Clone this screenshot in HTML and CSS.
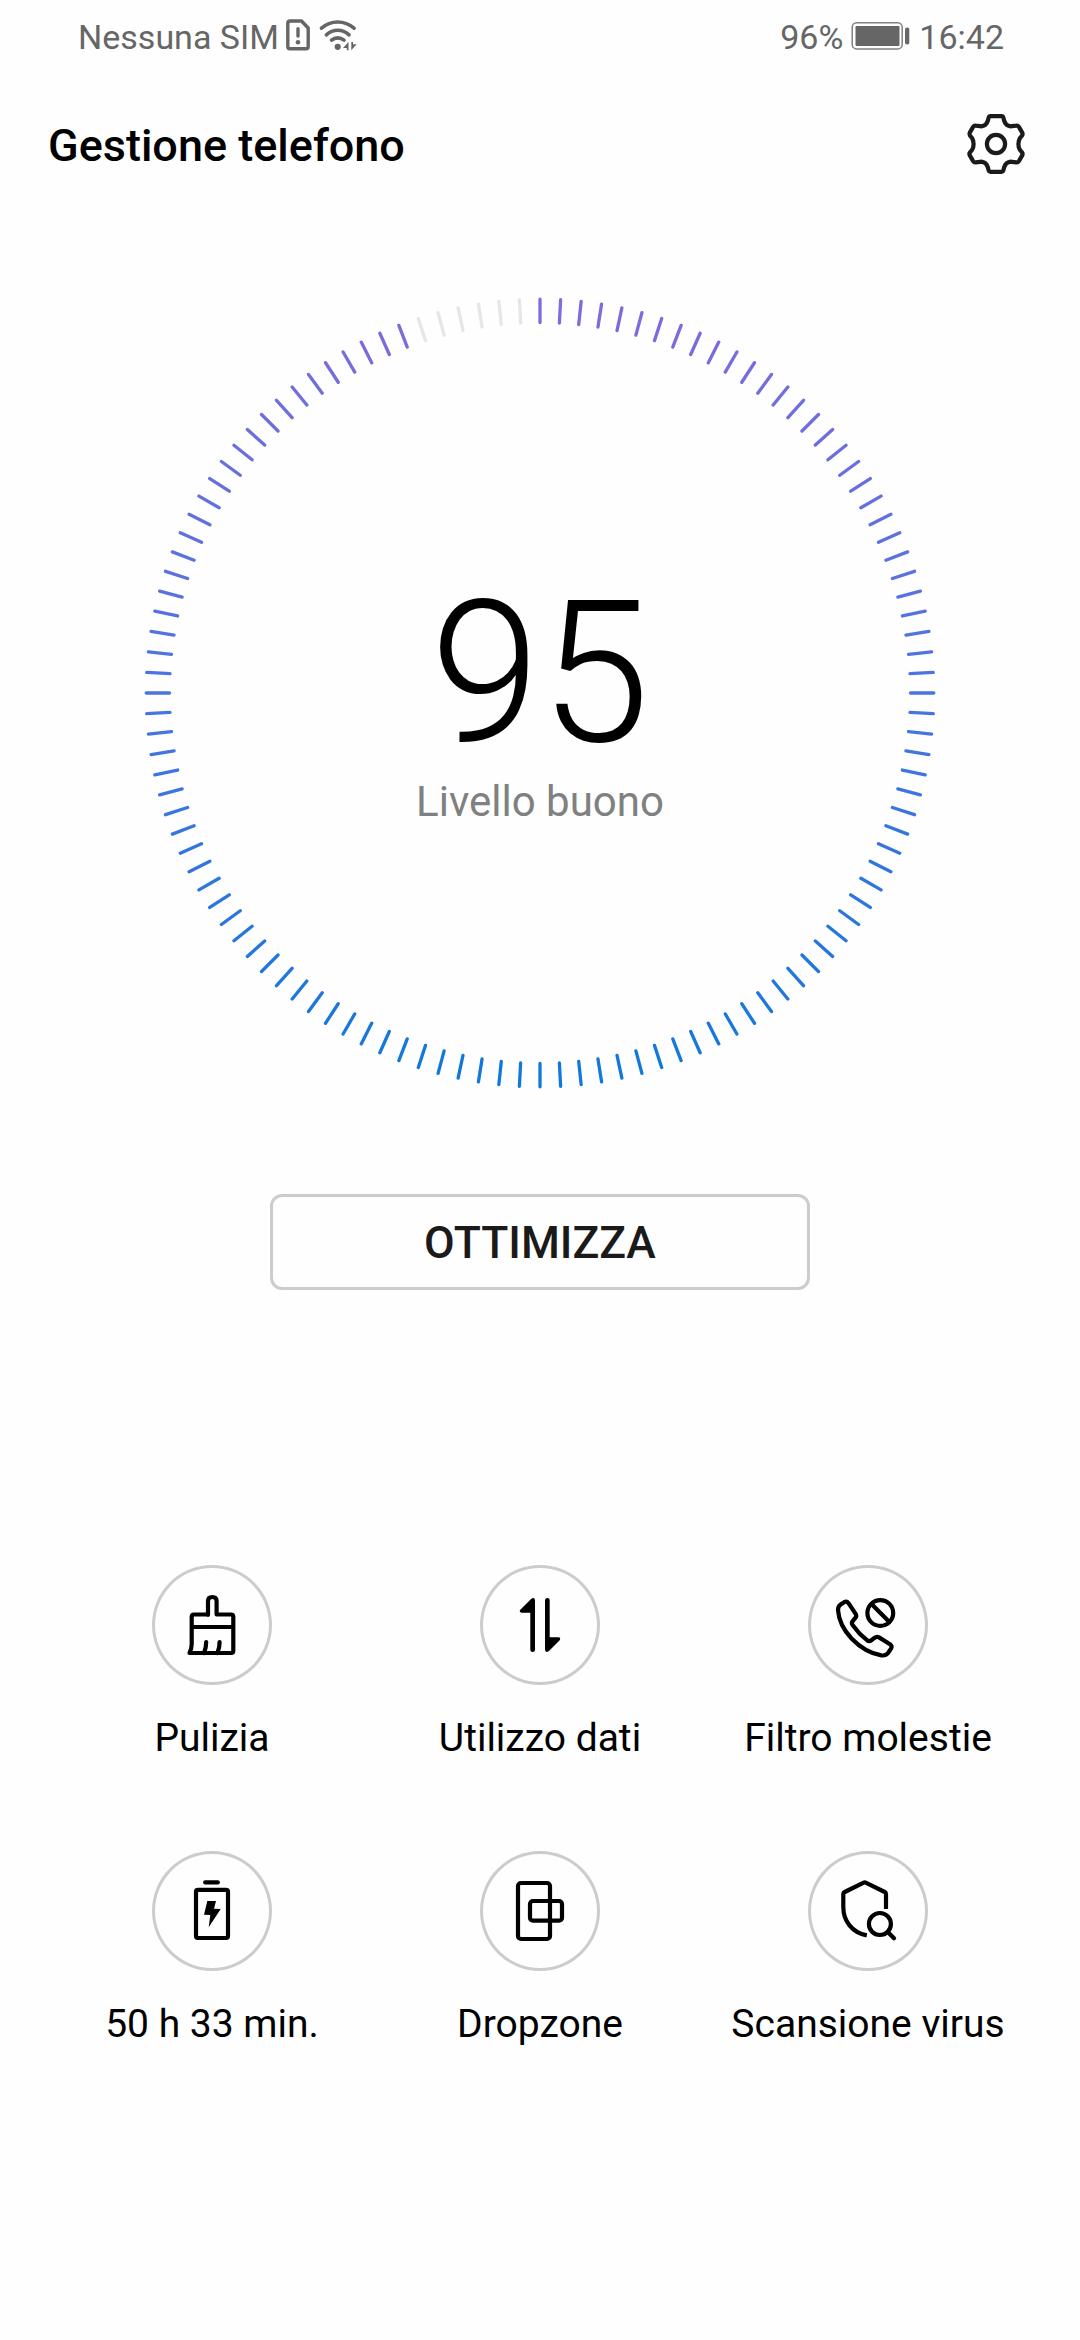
FILE: index.html
```html
<!DOCTYPE html>
<html lang="it">
<head>
<meta charset="utf-8">
<title>Gestione telefono</title>
<link rel="stylesheet" href="styles.css">
</head>
<body>
<div class="screen">
  <div class="status">
    <div class="status-side">
      <span>Nessuna SIM</span>
      <svg class="sim" width="24" height="32" viewBox="0 0 24 32" fill="none" stroke="#666" stroke-width="3.4" stroke-linejoin="round" stroke-linecap="round">
        <path d="M4 2H15.5L22.2 9V27.5Q22.2 29.8 20 29.8H4Q1.8 29.8 1.8 27.5V4.2Q1.8 2 4 2Z"/>
        <path d="M12 9.8V17"/><circle cx="12" cy="23.2" r="2.3" fill="#666" stroke="none"/>
      </svg>
      <svg class="wifi" width="38" height="32" viewBox="0 0 38 32" fill="none" stroke="#666" stroke-width="3.6" stroke-linecap="round">
        <path d="M2.5 9.2Q9.5 3 18.7 3T35 9.2M7.4 15.8Q12.5 11.3 18.7 11.3T30 15.8M12.6 21.2Q15.3 18.9 18.7 18.9T25 21.2"/>
        <circle cx="18.7" cy="27.8" r="3.1" fill="#666" stroke="none"/>
        <path d="M29.5 23V31.2H27.8V29H24ZM32.3 31.2V23H34V25.3H37.6Z" fill="#666" stroke="none"/>
      </svg>
    </div>
    <div class="status-side">
      <span>96%</span>
      <svg class="battery" width="60" height="30" viewBox="0 0 60 30">
        <rect x="1.2" y="1.7" width="50" height="26.2" rx="4.5" fill="none" stroke="#808080" stroke-width="1.5"/>
        <rect x="4.5" y="5" width="44" height="20" rx="1" fill="#666"/>
        <rect x="54" y="6.5" width="4.3" height="17" rx="2" fill="#666"/>
      </svg>
      <span>16:42</span>
    </div>
  </div>

  <header class="header">
    <h1 class="title">Gestione telefono</h1>
    <svg width="64" height="64" viewBox="0 0 64 64" fill="none" stroke="#1a1a1a" stroke-width="4.2" stroke-linejoin="round">
      <path id="cog" d="M31.9 4.2H37.5Q39 4.2 39.4 5.7L40.3 9.2Q41.7 13.6 46 14.3L52.3 13.7Q54 13.5 54.9 14.9L58.2 20.6Q59.1 22.2 58 23.6L56 26Q54.4 28.5 54.4 32.1"/>
      <use href="#cog" transform="matrix(-1 0 0 1 64 0)"/>
      <use href="#cog" transform="matrix(1 0 0 -1 0 64)"/>
      <use href="#cog" transform="matrix(-1 0 0 -1 64 64)"/>
      <circle cx="32" cy="32" r="9.1"/>
    </svg>
  </header>

  <section class="dial">
    <svg class="ring" width="800" height="800" viewBox="-400 -400 800 800">
      <defs>
        <linearGradient id="ringColor" gradientUnits="userSpaceOnUse" x1="0" y1="-396" x2="0" y2="396">
          <stop offset="0" stop-color="#7f6bdd"/>
          <stop offset="0.5" stop-color="#4a74e0"/>
          <stop offset="1" stop-color="#0f78dc"/>
        </linearGradient>
      </defs>
      <path class="tick-on" id="ticksOn"/>
      <path class="tick-off" id="ticksOff"/>
    </svg>
    <div class="score">95</div>
    <div class="level">Livello buono</div>
  </section>

  <button class="optimize">OTTIMIZZA</button>

  <nav class="grid">
    <div class="item">
      <svg class="icon" viewBox="0 0 120 120">
        <path d="M56 50V36Q56 32 60.3 32T64.6 36V49.5H79Q81.3 49.5 81.3 51.8V85.5Q81.3 88 79 88H37.5Q39.7 84 39.7 79V51.8Q39.7 49.5 42 49.5H56M40 62H81M54.2 77Q54.2 83 52 88M67.6 77Q67.6 83 65.4 88"/>
      </svg>
      <span>Pulizia</span>
    </div>
    <div class="item">
      <svg class="icon" viewBox="0 0 120 120">
        <path class="solid" d="M50.3 47.7H41.5Q38.8 47.2 40.3 44.8L51.3 33.8Q54.8 31.8 55 35.5V84.7A2.35 2.35 0 0 1 50.3 84.7ZM69.7 72.3H78.5Q81.2 72.8 79.7 75.2L68.7 86.2Q65.2 88.2 65 84.5V35.3A2.35 2.35 0 0 1 69.7 35.3Z"/>
      </svg>
      <span>Utilizzo dati</span>
    </div>
    <div class="item">
      <svg class="icon" viewBox="0 0 120 120">
        <path d="M30 45Q30 41.2 32.7 39.4L36.2 37.2Q38.8 35.8 40.5 38.2L47.8 49.2Q48.9 51.2 47.3 53L45 55.7Q43 57.8 44.6 60Q50.5 68.5 59 75.2Q61.2 76.8 63.4 75.2L66.3 73Q68.6 71.2 71 72.4L82 79.2Q84.5 81.2 83 83.6L80 88Q77.6 91 73.3 90.4Q57 87.5 43.5 73.5Q31 60 30 45Z"/>
        <circle cx="72.3" cy="48" r="12.9"/><path d="M63.5 39L81.4 57"/>
      </svg>
      <span>Filtro molestie</span>
    </div>
    <div class="item">
      <svg class="icon" viewBox="0 0 120 120">
        <path d="M53.2 31.4H65.8"/><rect x="44" y="38.8" width="32" height="48.2" rx="2"/>
        <path class="solid" d="M55.3 50H64L62 57.7L68.7 58L56.7 76.3L58.3 64L52 63.7Z"/>
      </svg>
      <span>50 h 33 min.</span>
    </div>
    <div class="item">
      <svg class="icon" viewBox="0 0 120 120">
        <rect x="38" y="32" width="32" height="56" rx="3"/><rect x="50" y="50" width="32" height="19.7" rx="3"/>
      </svg>
      <span>Dropzone</span>
    </div>
    <div class="item">
      <svg class="icon" viewBox="0 0 120 120">
        <path class="butt" d="M78 58V43Q78 41.6 76.7 41L58.2 31.8Q56.7 31 55.2 31.8L36.7 41Q35.3 41.6 35.3 43V56C35.3 70 44 81.5 58.8 84.4"/>
        <circle cx="71.9" cy="73" r="11"/><path d="M80 81.2L86 87.2"/>
      </svg>
      <span>Scansione virus</span>
    </div>
  </nav>
</div>
<script src="script.js"></script>
</body>
</html>
```
FILE: styles.css
```css
body {
  margin: 0;
  background: #fefefe;
  color: #000;
  font-family: Roboto, "Noto Sans", sans-serif;
}
.screen {
  display: flex;
  flex-direction: column;
  align-items: center;
  box-sizing: border-box;
  width: 1080px;
  height: 2340px;
  overflow: hidden;
}
.status {
  display: flex;
  justify-content: space-between;
  box-sizing: border-box;
  width: 100%;
  height: 72px;
  padding: 17px 76px 0 78px;
  color: #666;
  font-size: 34px;
  line-height: 40px;
}
.status-side {
  display: flex;
  align-items: flex-start;
}
.sim {
  margin: 2px 0 0 7px;
}
.wifi {
  margin: 2px 0 0 9px;
}
.battery {
  margin: 4px 8px 0 8px;
}
.header {
  display: flex;
  justify-content: space-between;
  align-items: center;
  box-sizing: border-box;
  width: 100%;
  height: 144px;
  padding: 0 52px 0 48px;
}
.title {
  margin: 4px 0 0;
  font-size: 45px;
  font-weight: 500;
  line-height: 54px;
}
.dial {
  display: grid;
  grid-template: 496px 80px 224px / 800px;
  justify-items: center;
  margin-top: 77px;
}
.ring {
  grid-area: 1 / 1 / 4 / 2;
}
.tick-on,
.tick-off {
  fill: none;
  stroke: url(#ringColor);
  stroke-width: 3.3;
  stroke-linecap: round;
}
.tick-off {
  stroke: #e6e6e6;
}
.score {
  grid-area: 1 / 1;
  align-self: end;
  font-size: 198px;
  font-weight: 300;
  line-height: 232px;
}
.level {
  grid-area: 2 / 1;
  align-self: start;
  margin-top: -12px;
  color: #808080;
  font-size: 42px;
  line-height: 50px;
}
.optimize {
  box-sizing: border-box;
  width: 540px;
  height: 96px;
  margin: 101px 0 275px;
  padding: 2px 0 0;
  border: 3px solid #ccc;
  border-radius: 12px;
  background: none;
  color: #1a1a1a;
  font: 500 44.5px Roboto, "Noto Sans", sans-serif;
}
.grid {
  display: grid;
  grid-template-columns: repeat(3, 328px);
  row-gap: 90px;
}
.item {
  display: flex;
  flex-direction: column;
  align-items: center;
  gap: 30px;
  font-size: 39px;
  line-height: 46px;
  white-space: nowrap;
}
.icon {
  box-sizing: border-box;
  width: 120px;
  height: 120px;
  border-radius: 50%;
  box-shadow: inset 0 0 0 3px #ccc;
  fill: none;
  stroke: #000;
  stroke-width: 4.2;
  stroke-linecap: round;
  stroke-linejoin: round;
}
.solid {
  fill: #000;
  stroke: none;
}
.butt {
  stroke-linecap: butt;
}
```
FILE: script.js
```js
// 120 ticks, one every 3 degrees; the last 6 stay unlit.
const TOTAL = 120;
const LIT = 114;
const INNER = 370.5;
const OUTER = 393.8;
const paths = { on: "", off: "" };
for (let i = 0; i < TOTAL; i++) {
  const a = (i / TOTAL) * 2 * Math.PI;
  const s = Math.sin(a);
  const c = -Math.cos(a);
  const point = (r) => `${(s * r).toFixed(2)} ${(c * r).toFixed(2)}`;
  paths[i < LIT ? "on" : "off"] += `M${point(INNER)}L${point(OUTER)}`;
}
document.getElementById("ticksOn").setAttribute("d", paths.on);
document.getElementById("ticksOff").setAttribute("d", paths.off);
```
